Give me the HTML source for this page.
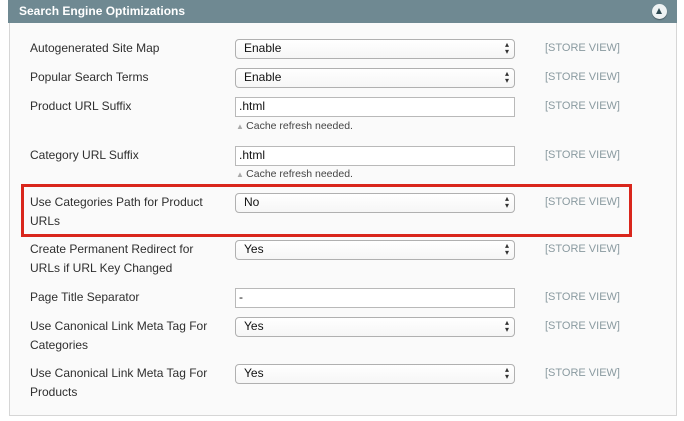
<!DOCTYPE html>
<html><head><style>
body{margin:0;width:684px;height:421px;background:#fff;position:relative;overflow:hidden;font-family:"Liberation Sans",Arial,sans-serif;}
.hd{position:absolute;left:8px;top:0;width:669px;height:23px;background:#6f8992;}
.hd span{position:absolute;left:11px;top:4px;color:#fff;font-weight:bold;font-size:12px;}
.btn{position:absolute;left:644px;top:4px;width:15px;height:15px;border-radius:50%;background:#eef2f3;box-shadow:0 1px 1px #4a5e64;}
.btn:after{content:"";position:absolute;left:4px;top:4px;border-left:3.5px solid transparent;border-right:3.5px solid transparent;border-bottom:6px solid #2f4a52;}
.pn{position:absolute;left:9px;top:23px;width:666px;height:392px;background:#fafafa;border:1px solid #d6d6d6;border-top:none;}
.l{position:absolute;left:30px;font-size:12px;color:#2f2f2f;line-height:19px;}
.c{position:absolute;left:235px;width:278px;height:18px;border:1px solid #b9b9b9;background:#fff;font-size:12px;line-height:17px;color:#111;box-sizing:content-box;}
.c span{position:absolute;left:8px;top:0;}
.sel{border-radius:4px;border-color:#b0b0b0;background:linear-gradient(#fff,#f6f6f6);}
.sel:after{content:"▴\A▾";white-space:pre;position:absolute;right:5px;top:1px;font-size:8px;line-height:7px;color:#333;}
.inp span{left:3px;}
.s{position:absolute;left:545px;font-size:11px;color:#8a9aa0;}
.n{position:absolute;left:236px;font-size:10.5px;color:#444;}
.n:before{content:"▲ ";color:#aaa;font-size:8px;}
.red{position:absolute;left:21px;top:184px;width:605px;height:47px;border:3px solid #d9261c;}
</style></head><body>
<div class="hd"><span>Search Engine Optimizations</span><div class="btn"></div></div>
<div class="pn"></div>

<div class="l" style="top:39px">Autogenerated Site Map</div>
<div class="c sel" style="top:39px"><span>Enable</span></div>
<div class="s" style="top:42px">[STORE VIEW]</div>

<div class="l" style="top:68px">Popular Search Terms</div>
<div class="c sel" style="top:68px"><span>Enable</span></div>
<div class="s" style="top:71px">[STORE VIEW]</div>

<div class="l" style="top:97px">Product URL Suffix</div>
<div class="c inp" style="top:97px"><span>.html</span></div>
<div class="s" style="top:100px">[STORE VIEW]</div>
<div class="n" style="top:120px">Cache refresh needed.</div>

<div class="l" style="top:146px">Category URL Suffix</div>
<div class="c inp" style="top:146px"><span>.html</span></div>
<div class="s" style="top:149px">[STORE VIEW]</div>
<div class="n" style="top:168px">Cache refresh needed.</div>

<div class="l" style="top:193px">Use Categories Path for Product<br>URLs</div>
<div class="c sel" style="top:193px"><span>No</span></div>
<div class="s" style="top:196px">[STORE VIEW]</div>

<div class="l" style="top:240px">Create Permanent Redirect for<br>URLs if URL Key Changed</div>
<div class="c sel" style="top:240px"><span>Yes</span></div>
<div class="s" style="top:243px">[STORE VIEW]</div>

<div class="l" style="top:288px">Page Title Separator</div>
<div class="c inp" style="top:288px"><span>-</span></div>
<div class="s" style="top:291px">[STORE VIEW]</div>

<div class="l" style="top:317px">Use Canonical Link Meta Tag For<br>Categories</div>
<div class="c sel" style="top:317px"><span>Yes</span></div>
<div class="s" style="top:320px">[STORE VIEW]</div>

<div class="l" style="top:364px">Use Canonical Link Meta Tag For<br>Products</div>
<div class="c sel" style="top:364px"><span>Yes</span></div>
<div class="s" style="top:367px">[STORE VIEW]</div>

<div class="red"></div>
</body></html>
